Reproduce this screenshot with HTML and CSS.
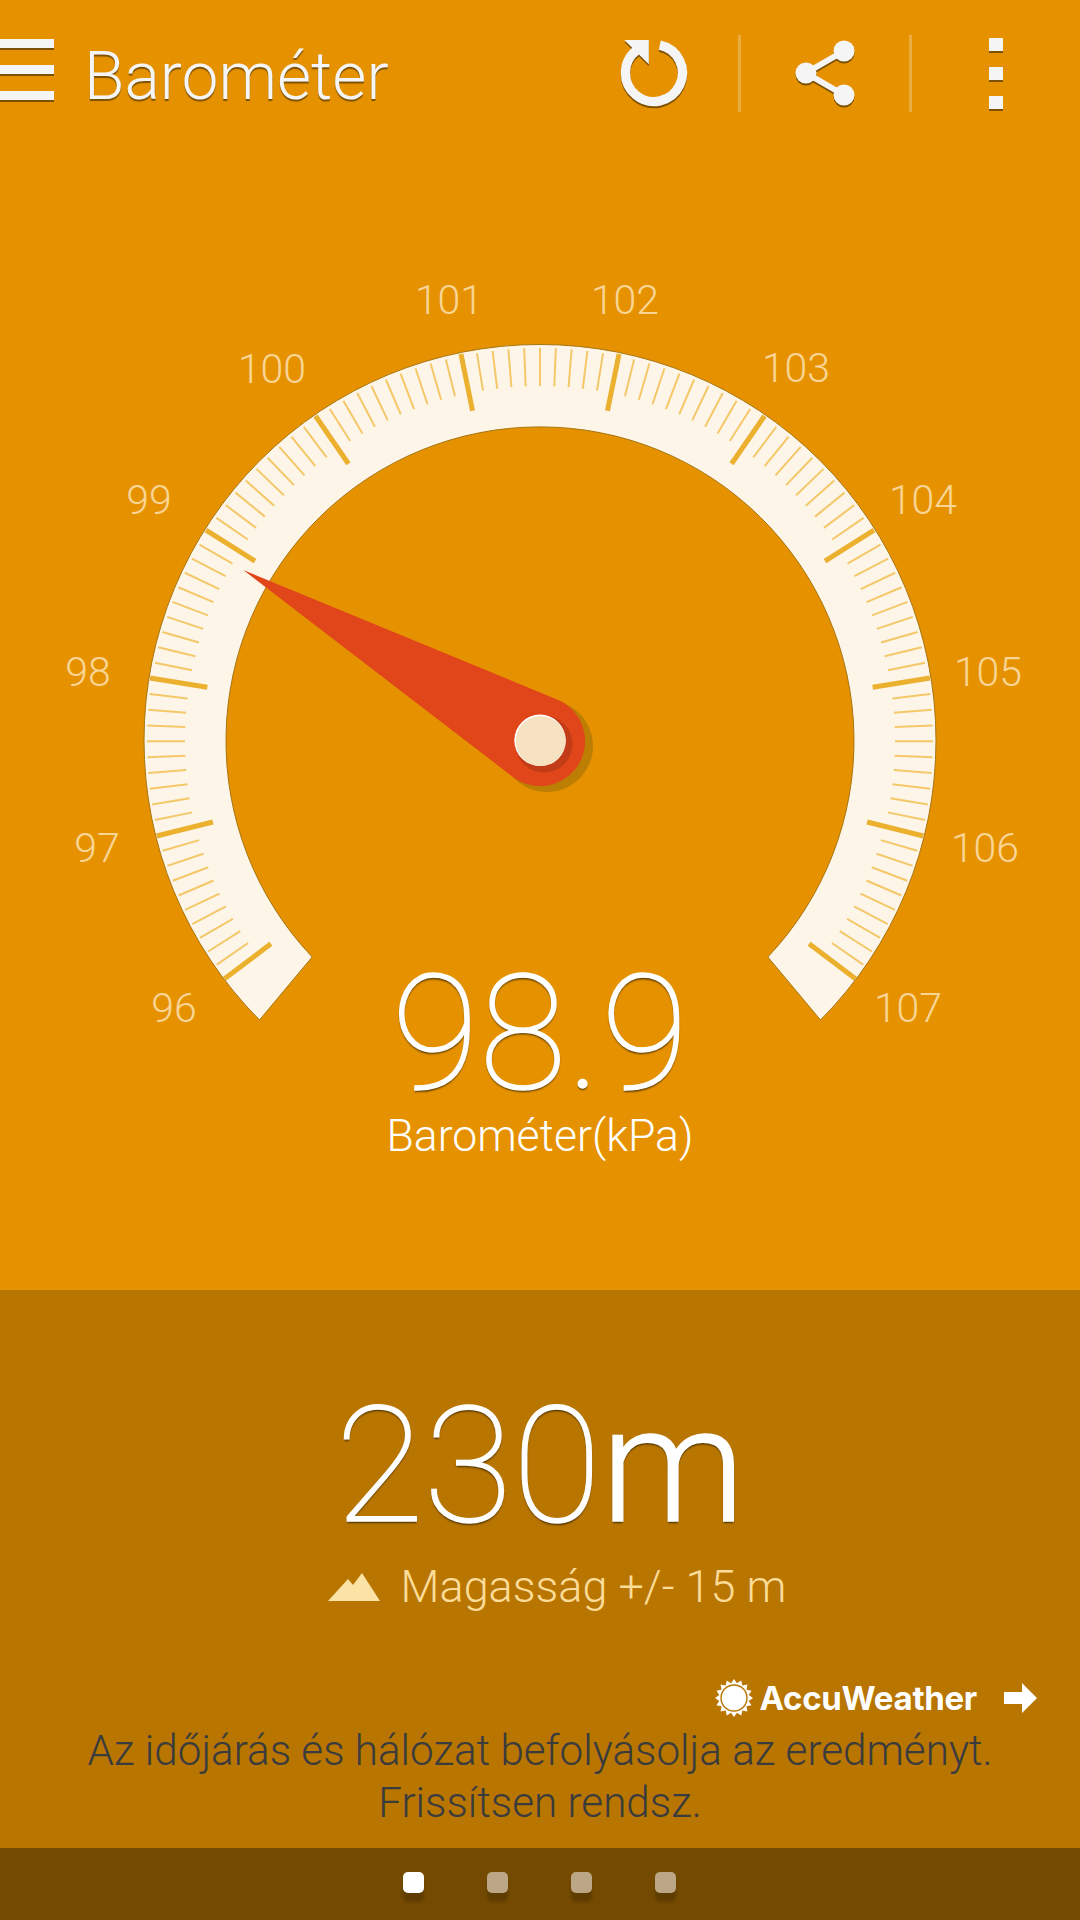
FILE: index.html
```html
<!DOCTYPE html>
<html lang="hu">
<head>
    <meta charset="UTF-8">
    <meta name="viewport" content="width=device-width, initial-scale=1.0">
    <title>Barométer</title>
    <link rel="stylesheet" href="styles.css">
</head>
<body>

    <div id="top">
        <div id="header">
            <div id="menu"><span></span><span></span><span></span></div>
            <div id="title">Barométer</div>
            <div id="actions">
                <div class="action">
                    <svg class="icon" width="70" height="70" viewBox="0 0 70 70">
                        <path d="M40.800 7.100 A28.500 28.500 0 1 1 18 12.100" fill="none" stroke="#f5f5f5" stroke-width="9.300"/>
                        <path d="M5.300 2 H29.800 V26.300 Z" fill="#f5f5f5"/>
                    </svg>
                </div>
                <div class="action">
                    <svg class="icon" width="70" height="70" viewBox="0 0 70 70">
                        <path d="M54 13 L16 35 L54 57" fill="none" stroke="#f5f5f5" stroke-width="6"/>
                        <circle cx="54" cy="13" r="10.500" fill="#f5f5f5"/>
                        <circle cx="16" cy="35" r="10.500" fill="#f5f5f5"/>
                        <circle cx="54" cy="57" r="10.500" fill="#f5f5f5"/>
                    </svg>
                </div>
                <div class="action last">
                    <div id="more"><span></span><span></span><span></span></div>
                </div>
            </div>
        </div>

        <svg id="gauge" width="1080" height="812" viewBox="0 146 1080 812">
            <path id="dial" d="M259.500 1020 A396 396 0 1 1 820.500 1020 L767.800 957 A314 314 0 1 0 312.200 957 Z"/>
            <g id="ticks"></g>
            <g id="labels"></g>
            <circle cx="547" cy="746" r="46" fill="#bd7e04"/>
            <path d="M243.300 570 L557.100 699.400 A45 45 0 1 1 512.600 776.700 Z" fill="#e1451a"/>
            <circle cx="544" cy="744" r="28.500" fill="#c23c17"/>
            <circle cx="540" cy="740.300" r="25.700" fill="#fff"/>
            <circle cx="540.700" cy="741" r="25" fill="#f6e2c0"/>
        </svg>

        <div id="pressure">98.9</div>
        <div id="pressureLabel">Barométer(kPa)</div>
    </div>

    <div id="panel">
        <div id="altitude">230<span id="altitudeUnit">m</span></div>
        <div id="accuracy">
            <svg width="52" height="30" viewBox="0 0 52 30">
                <path d="M0 29 L20 7 L25 13 L34 1 L52 29 Z" fill="#fde2a6"/>
            </svg>
            <span>Magasság +/- 15 m</span>
        </div>
        <div id="accu">
            <svg width="38" height="38" viewBox="-19 -19 38 38">
                <path id="sunRays" fill="#fff"/>
                <circle r="13.700" fill="#b87500"/>
                <circle r="12.300" fill="#fff"/>
            </svg>
            <span id="accuName">AccuWeather</span>
            <svg id="accuArrow" width="34" height="30" viewBox="0 0 34 30">
                <path d="M0 9 H18 V0 L33 15 L18 30 V21 H0 Z" fill="#fff"/>
            </svg>
        </div>
        <div id="notice">Az időjárás és hálózat befolyásolja az eredményt.<br>Frissítsen rendsz.</div>
    </div>

    <div id="footer">
        <span class="dot active"></span>
        <span class="dot"></span>
        <span class="dot"></span>
        <span class="dot"></span>
    </div>

    <script src="script.js"></script>

</body>
</html>
```

FILE: styles.css
```css
body {
    font-family: Roboto, "Liberation Sans", sans-serif;
    margin: 0;
    padding: 0;
    width: 1080px;
    height: 1920px;
    overflow: hidden;
    background-color: #e69200;
}
#top {
    height: 1290px;
    background-color: #e69200;
    text-align: center;
}
#header {
    display: flex;
    align-items: center;
    height: 146px;
}
#menu {
    display: flex;
    flex-direction: column;
    gap: 17px;
    width: 54px;
    margin-bottom: 7px;
}
#menu span {
    display: block;
    height: 9px;
    background-color: #f5f5f5;
    box-shadow: 0 2px 0 #7d5000;
}
#title {
    margin-left: 30px;
    margin-top: 6px;
    font-size: 66px;
    font-weight: 300;
    color: #f5f5f5;
    text-shadow: 0 2px 1px #7d5000;
}
#actions {
    display: flex;
    margin-left: auto;
}
.action {
    display: flex;
    align-items: center;
    justify-content: center;
    width: 168px;
    height: 77px;
    border-right: 3px solid rgba(255, 255, 255, 0.25);
}
.action.last {
    border-right: none;
}
.icon {
    filter: drop-shadow(0 2px 0 #7d5000);
}
#more {
    display: flex;
    flex-direction: column;
    gap: 16px;
}
#more span {
    display: block;
    width: 14px;
    height: 13px;
    background-color: #f5f5f5;
    box-shadow: 0 2px 0 #7d5000;
}
#gauge {
    display: block;
    overflow: visible;
}
#dial {
    fill: #fdf5e8;
    stroke: #a87510;
    stroke-width: 1;
}
.tick {
    stroke: #f4c868;
    stroke-width: 2;
}
.tick.major {
    stroke: #ecb02f;
    stroke-width: 5;
}
.label {
    font-size: 41px;
    font-weight: 300;
    fill: #f9d596;
    text-anchor: middle;
}
#pressure {
    font-size: 160px;
    font-weight: 100;
    line-height: 152px;
    color: #fff;
    -webkit-text-stroke: 1.3px #fff;
    text-shadow: 0 2px 2px #5a3a00;
}
#pressureLabel {
    font-size: 44.5px;
    font-weight: 300;
    line-height: 52px;
    color: #fff;
}
#panel {
    height: 558px;
    background-color: #b87500;
    text-align: center;
    overflow: hidden;
}
#altitude {
    margin-top: 92px;
    font-size: 162px;
    font-weight: 100;
    line-height: 168px;
    color: #fff;
    -webkit-text-stroke: 1.5px #fff;
    text-shadow: 0 2px 2px #4a3000;
}
#altitudeUnit {
    font-weight: 300;
}
#accuracy {
    display: flex;
    align-items: center;
    justify-content: center;
    gap: 21px;
    margin-top: 11px;
    padding-left: 34px;
    font-size: 45px;
    font-weight: 300;
    line-height: 52px;
    color: #fbdc98;
}
#accu {
    display: flex;
    align-items: center;
    justify-content: flex-end;
    margin-top: 66px;
    padding-right: 42px;
    height: 38px;
}
#accuName {
    margin-left: 6px;
    font-family: Inter, "Liberation Sans", sans-serif;
    font-size: 33px;
    font-weight: 700;
    letter-spacing: -0.3px;
    color: #fff;
}
#accuArrow {
    margin-left: 27px;
}
#notice {
    margin-top: 8px;
    font-size: 42.2px;
    font-weight: 300;
    line-height: 52px;
    color: #3a3b3d;
}
#footer {
    display: flex;
    justify-content: center;
    align-items: center;
    gap: 63px;
    box-sizing: border-box;
    height: 72px;
    padding-bottom: 3px;
    padding-right: 1px;
    background-color: #744a00;
}
.dot {
    width: 21px;
    height: 21px;
    border-radius: 5px;
    background-color: #bba785;
    box-shadow: 0 9px 3px rgba(0, 0, 0, 0.18);
}
.dot.active {
    background-color: #fff;
}
```

FILE: script.js
```js
// Mittelpunkt der Skala
const cx = 540;
const cy = 741;
const svgNS = 'http://www.w3.org/2000/svg';

const ticks = document.getElementById('ticks');
const labels = document.getElementById('labels');

// 96 bis 107, je 10 Teilstriche
const startAngle = -37;
const stepAngle = 254 / 110;

for (let i = 0; i <= 110; i++) {
    const major = i % 10 === 0;
    const a = (startAngle + i * stepAngle) * Math.PI / 180;
    const outer = major ? 395 : 393;
    const inner = major ? 337 : 355;
    const line = document.createElementNS(svgNS, 'line');
    line.setAttribute('x1', cx - outer * Math.cos(a));
    line.setAttribute('y1', cy - outer * Math.sin(a));
    line.setAttribute('x2', cx - inner * Math.cos(a));
    line.setAttribute('y2', cy - inner * Math.sin(a));
    line.setAttribute('class', major ? 'tick major' : 'tick');
    ticks.appendChild(line);
}

// Beschriftung: Wert, x, y (Grundlinie)
const labelData = [
    ['96', 174, 1022], ['97', 97, 862], ['98', 88, 686], ['99', 149, 514],
    ['100', 272, 383], ['101', 449, 314], ['102', 625, 314], ['103', 796, 382],
    ['104', 923, 514], ['105', 988, 686], ['106', 985, 862], ['107', 908, 1022]
];

labelData.forEach(([value, x, y]) => {
    const text = document.createElementNS(svgNS, 'text');
    text.setAttribute('x', x);
    text.setAttribute('y', y);
    text.setAttribute('class', 'label');
    text.textContent = value;
    labels.appendChild(text);
});

// Sonne im AccuWeather-Logo
let rays = '';
for (let i = 0; i < 32; i++) {
    const r = i % 2 === 0 ? 19 : 15;
    const a = i * Math.PI / 16;
    rays += (i === 0 ? 'M' : 'L') + (r * Math.cos(a)).toFixed(2) + ' ' + (r * Math.sin(a)).toFixed(2) + ' ';
}
document.getElementById('sunRays').setAttribute('d', rays + 'Z');
```
